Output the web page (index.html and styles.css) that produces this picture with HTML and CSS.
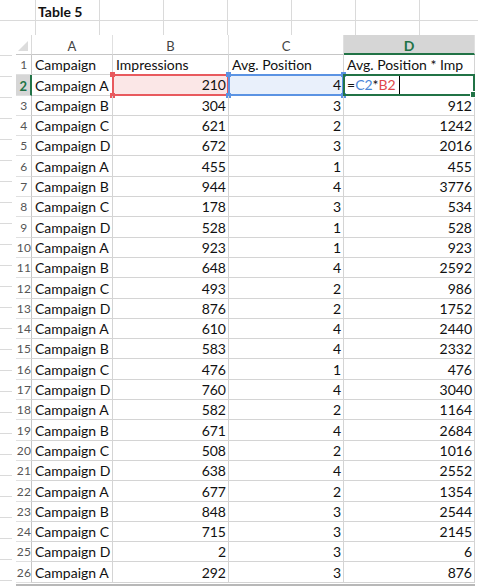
FILE: index.html
```html
<!DOCTYPE html>
<html>
<head>
<meta charset="utf-8">
<link rel="stylesheet" href="styles.css">
</head>
<body>
<div class="page">
  <div class="topband">
    <div class="tcell"></div><div class="tcell title">Table 5</div><div class="tcell"></div><div class="tcell"></div><div class="tcell"></div><div class="tcell"></div><div class="tcell"></div><div class="tcell"></div>
    <div class="tcell s"></div><div class="tcell s"></div><div class="tcell s"></div><div class="tcell s"></div><div class="tcell s"></div><div class="tcell s"></div><div class="tcell s"></div><div class="tcell s"></div>
  </div>
  <div class="mainrow">
    <div class="gutter"></div>
    <div class="sheet">
      <div class="corner"><span class="tri"></span></div>
      <div class="colhead">A</div>
      <div class="colhead">B</div>
      <div class="colhead">C</div>
      <div class="colhead sel">D</div>

      <div class="rowhead">1</div><div class="c">Campaign</div><div class="c">Impressions</div><div class="c">Avg. Position</div><div class="c">Avg. Position * Imp</div>
      <div class="rowhead sel">2</div><div class="c">Campaign A</div>
      <div class="c n refb">210<i class="h tl"></i><i class="h tr"></i><i class="h bl"></i><i class="h br"></i></div>
      <div class="c n refc">4<i class="h tl"></i><i class="h tr"></i><i class="h bl"></i><i class="h br"></i></div>
      <div class="c active"><span>=</span><span class="blue">C2</span><span>*</span><span class="red">B2</span><span class="caret"></span><i class="fill"></i></div>

      <div class="rowhead">3</div><div class="c">Campaign B</div><div class="c n">304</div><div class="c n">3</div><div class="c n">912</div>
      <div class="rowhead">4</div><div class="c">Campaign C</div><div class="c n">621</div><div class="c n">2</div><div class="c n">1242</div>
      <div class="rowhead">5</div><div class="c">Campaign D</div><div class="c n">672</div><div class="c n">3</div><div class="c n">2016</div>
      <div class="rowhead">6</div><div class="c">Campaign A</div><div class="c n">455</div><div class="c n">1</div><div class="c n">455</div>
      <div class="rowhead">7</div><div class="c">Campaign B</div><div class="c n">944</div><div class="c n">4</div><div class="c n">3776</div>
      <div class="rowhead">8</div><div class="c">Campaign C</div><div class="c n">178</div><div class="c n">3</div><div class="c n">534</div>
      <div class="rowhead">9</div><div class="c">Campaign D</div><div class="c n">528</div><div class="c n">1</div><div class="c n">528</div>
      <div class="rowhead">10</div><div class="c">Campaign A</div><div class="c n">923</div><div class="c n">1</div><div class="c n">923</div>
      <div class="rowhead">11</div><div class="c">Campaign B</div><div class="c n">648</div><div class="c n">4</div><div class="c n">2592</div>
      <div class="rowhead">12</div><div class="c">Campaign C</div><div class="c n">493</div><div class="c n">2</div><div class="c n">986</div>
      <div class="rowhead">13</div><div class="c">Campaign D</div><div class="c n">876</div><div class="c n">2</div><div class="c n">1752</div>
      <div class="rowhead">14</div><div class="c">Campaign A</div><div class="c n">610</div><div class="c n">4</div><div class="c n">2440</div>
      <div class="rowhead">15</div><div class="c">Campaign B</div><div class="c n">583</div><div class="c n">4</div><div class="c n">2332</div>
      <div class="rowhead">16</div><div class="c">Campaign C</div><div class="c n">476</div><div class="c n">1</div><div class="c n">476</div>
      <div class="rowhead">17</div><div class="c">Campaign D</div><div class="c n">760</div><div class="c n">4</div><div class="c n">3040</div>
      <div class="rowhead">18</div><div class="c">Campaign A</div><div class="c n">582</div><div class="c n">2</div><div class="c n">1164</div>
      <div class="rowhead">19</div><div class="c">Campaign B</div><div class="c n">671</div><div class="c n">4</div><div class="c n">2684</div>
      <div class="rowhead">20</div><div class="c">Campaign C</div><div class="c n">508</div><div class="c n">2</div><div class="c n">1016</div>
      <div class="rowhead">21</div><div class="c">Campaign D</div><div class="c n">638</div><div class="c n">4</div><div class="c n">2552</div>
      <div class="rowhead">22</div><div class="c">Campaign A</div><div class="c n">677</div><div class="c n">2</div><div class="c n">1354</div>
      <div class="rowhead">23</div><div class="c">Campaign B</div><div class="c n">848</div><div class="c n">3</div><div class="c n">2544</div>
      <div class="rowhead">24</div><div class="c">Campaign C</div><div class="c n">715</div><div class="c n">3</div><div class="c n">2145</div>
      <div class="rowhead">25</div><div class="c">Campaign D</div><div class="c n">2</div><div class="c n">3</div><div class="c n">6</div>
      <div class="rowhead">26</div><div class="c">Campaign A</div><div class="c n">292</div><div class="c n">3</div><div class="c n">876</div>
    </div>
    <div class="rgutter"></div>
  </div>
</div>
</body>
</html>
```

FILE: styles.css
```css
html, body {
  margin: 0;
  padding: 0;
  background: #ffffff;
}
body {
  font-family: Lato, "Liberation Sans", sans-serif;
  font-size: 14px;
  color: #111;
  overflow: hidden;
}
.page {
  width: 478px;
  height: 586px;
  overflow: hidden;
}
.topband {
  display: grid;
  grid-template-columns: 36px repeat(7, 64px);
  grid-template-rows: 21px 14px;
}
.tcell {
  box-sizing: border-box;
  border-right: 1px solid #dadada;
  border-bottom: 1px solid #dadada;
}
.tcell.s {
  border-bottom: none;
}
.title {
  font-weight: bold;
  font-size: 14px;
  display: flex;
  align-items: center;
  padding-left: 2px;
  padding-top: 2px;
}
.mainrow {
  display: flex;
}
.gutter {
  width: 16px;
  height: 551px;
  background: repeating-linear-gradient(to bottom, transparent 0, transparent 20px, #dadada 20px, #dadada 21px);
  background-size: 12px 100%;
  background-repeat: no-repeat;
}
.rgutter {
  width: 3px;
  height: 551px;
}
.sheet {
  display: grid;
  grid-template-columns: 16px 81px 116px 115px 131px;
  grid-template-rows: 20px;
  grid-auto-rows: 20.3px;
  width: 459px;
  height: 549px;
  overflow: hidden;
  border-bottom: 2px solid #b8b8b8;
  background: #fff;
}
.corner {
  position: relative;
  border-right: 1px solid #dadada;
  border-bottom: 1px solid #c6c6c6;
  box-sizing: border-box;
}
.tri {
  position: absolute;
  right: 3px;
  bottom: 3px;
  width: 0;
  height: 0;
  border-left: 10px solid transparent;
  border-bottom: 10px solid #dcdcdc;
}
.colhead {
  box-sizing: border-box;
  border-right: 1px solid #e0e0e0;
  border-bottom: 1px solid #c6c6c6;
  display: flex;
  align-items: center;
  justify-content: center;
  color: #444;
  font-size: 13px;
  padding-top: 2px;
}
.colhead.sel {
  background: #d6d6d6;
  color: #217346;
  font-weight: bold;
  font-size: 14px;
  border-bottom: 2px solid #217346;
}
.rowhead {
  box-sizing: border-box;
  border-right: 1px solid #c6c6c6;
  border-bottom: 1px solid #e0e0e0;
  display: flex;
  align-items: flex-end;
  justify-content: center;
  color: #555;
  font-size: 12px;
  line-height: 16px;
  padding-bottom: 1px;
  padding-left: 1px;
  letter-spacing: 0.3px;
}
.rowhead.sel {
  background: #d6d6d6;
  color: #217346;
  font-weight: bold;
  font-size: 13px;
  border-right: 2px solid #217346;
}
.c {
  position: relative;
  box-sizing: border-box;
  border-right: 1px solid #d4d4d4;
  border-bottom: 1px solid #d4d4d4;
  display: flex;
  align-items: flex-end;
  line-height: 16px;
  padding: 0 2px 1px 3px;
  white-space: nowrap;
}
.c.n {
  justify-content: flex-end;
}
.refb {
  background: #fbe7e7;
  border: 2px solid #e85a5e;
  margin: -1px 0 0 -1px;
  padding-right: 1px;
}
.refc {
  background: #e9f0fb;
  border: 2px solid #5b93e3;
  margin: -1px 0 0 -1px;
  padding-right: 1px;
}
.h {
  position: absolute;
  width: 5px;
  height: 5px;
}
.refb .h { background: #e85a5e; }
.refc .h { background: #5b93e3; }
.h.tl { left: -4px; top: -4px; }
.h.tr { right: -4px; top: -4px; }
.h.bl { left: -4px; bottom: -4px; }
.h.br { right: -4px; bottom: -4px; }
.active {
  border: 2px solid #217346;
  margin: -1px 0 0 -1px;
  padding-left: 2px;
  z-index: 2;
}
.blue { color: #4a86d8; }
.red { color: #e0474c; }
.caret {
  display: inline-block;
  width: 1px;
  height: 18px;
  background: #000;
  margin-left: 3px;
  margin-bottom: -1px;
}
.fill {
  position: absolute;
  right: -4px;
  bottom: -4px;
  width: 5px;
  height: 5px;
  background: #217346;
  border: 1px solid #fff;
}
```
